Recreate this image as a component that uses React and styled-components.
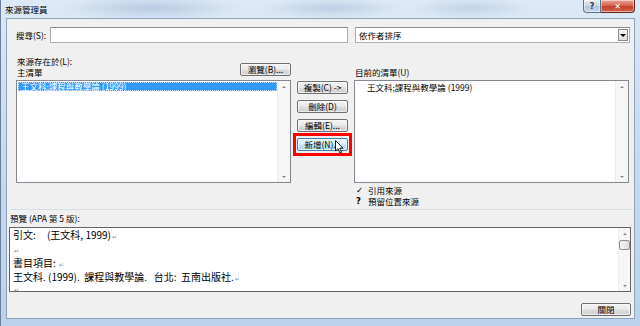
import styled, { createGlobalStyle } from "styled-components";

const GlobalStyle = createGlobalStyle`
  html, body { margin: 0; padding: 0; background: #fff; }
  body {
    font-family: "Noto Sans CJK TC", "Noto Sans", sans-serif;
    color: #000;
  }
`;

const App = () => {
  return (
    <>
      <GlobalStyle />
      <Window>
        <TitleBar>
          <Title>來源管理員</Title>
          <Captions>
            <CaptionButton>?</CaptionButton>
            <CaptionButton $close>✕</CaptionButton>
          </Captions>
        </TitleBar>

        <Client>
          <SearchRow>
            <Label $width={34}>搜尋(S):</Label>
            <TextBox />
            <Select>
              <span>依作者排序</span>
              <SelectArrow />
            </Select>
          </SearchRow>

          <Main>
            <Pane>
              <PaneHeader>
                <Labels>
                  <Label>來源存在於(L):</Label>
                  <Label>主清單</Label>
                </Labels>
                <Button $width={51}>瀏覽(B)...</Button>
              </PaneHeader>
              <ListBox>
                <Items>
                  <ListItem $selected>王文科;課程與教學論 (1999)</ListItem>
                </Items>
                <ScrollBar>
                  <ScrollArrow />
                  <ScrollArrow $down />
                </ScrollBar>
              </ListBox>
            </Pane>

            <Middle>
              <Button>複製(C) -&gt;</Button>
              <Button>刪除(D)</Button>
              <Button>編輯(E)...</Button>
              <Button $hover $marked>
                新增(N)...
                <Cursor viewBox="0 0 9 14">
                  <path
                    d="M0.5 0.5 L0.5 11 L3 8.7 L5 13 L6.6 12.3 L4.7 8.2 L8 8.2 Z"
                    fill="#fff"
                    stroke="#000"
                    strokeWidth="0.9"
                    strokeLinejoin="round"
                  />
                </Cursor>
              </Button>
            </Middle>

            <Pane>
              <PaneHeader>
                <Label>目前的清單(U)</Label>
              </PaneHeader>
              <ListBox>
                <Items>
                  <ListItem $indent>王文科;課程與教學論 (1999)</ListItem>
                </Items>
                <ScrollBar>
                  <ScrollArrow />
                  <ScrollArrow $down />
                </ScrollBar>
              </ListBox>
              <Legend>
                <LegendRow>
                  <Mark>✓</Mark>
                  <span>引用來源</span>
                </LegendRow>
                <LegendRow>
                  <Mark>?</Mark>
                  <span>預留位置來源</span>
                </LegendRow>
              </Legend>
            </Pane>
          </Main>

          <Divider />
          <PreviewLabel>預覽 (APA 第 5 版):</PreviewLabel>
          <Preview>
            <PreviewText>
              <Line>
                引文:&nbsp;&nbsp;&nbsp;&nbsp;&nbsp;(王文科, 1999)<Pilcrow>↵</Pilcrow>
              </Line>
              <Line>
                <Pilcrow>↵</Pilcrow>
              </Line>
              <Line>
                書目項目: <Pilcrow>↵</Pilcrow>
              </Line>
              <Line>
                王文科. (1999).&nbsp;&nbsp;課程與教學論.&nbsp;&nbsp;&nbsp;台北:&nbsp;&nbsp;五南出版社.
                <Pilcrow>↵</Pilcrow>
              </Line>
              <Line $last>
                <Pilcrow>↵</Pilcrow>
              </Line>
            </PreviewText>
            <ScrollBar $wide>
              <ScrollArrow />
              <Thumb />
              <Spacer />
              <ScrollArrow $down />
            </ScrollBar>
          </Preview>

          <Footer>
            <Button $width={50}>關閉</Button>
          </Footer>
        </Client>
      </Window>
    </>
  );
};

export default App;

const Window = styled.div`
  width: 640px;
  height: 326px;
  box-sizing: border-box;
  display: flex;
  flex-direction: column;
  overflow: hidden;
  border-left: 1px solid #6b7f99;
  background:
    radial-gradient(ellipse 90px 12px at 150px 8px, rgba(120, 150, 190, 0.35), transparent),
    radial-gradient(ellipse 70px 10px at 330px 8px, rgba(120, 150, 190, 0.3), transparent),
    radial-gradient(ellipse 60px 10px at 470px 8px, rgba(120, 150, 190, 0.25), transparent),
    linear-gradient(180deg, #dce9f6 0%, #c9dcf0 40%, #bcd2ea 100%);
`;

const TitleBar = styled.div`
  height: 18px;
  display: flex;
  align-items: flex-start;
  padding-left: 4px;
`;

const Title = styled.div`
  font-size: 8.5px;
  line-height: 18px;
  color: #000;
`;

const Captions = styled.div`
  margin-left: auto;
  margin-right: 5px;
  display: flex;
`;

const CaptionButton = styled.div`
  width: ${(p) => (p.$close ? 34 : 18)}px;
  height: 13px;
  box-sizing: border-box;
  display: flex;
  align-items: center;
  justify-content: center;
  font-family: "DejaVu Sans", sans-serif;
  font-size: 8px;
  font-weight: bold;
  color: ${(p) => (p.$close ? "#fff" : "#2a3a50")};
  border: 1px solid ${(p) => (p.$close ? "#6b2a20" : "#5d7191")};
  border-top: none;
  border-left: ${(p) => (p.$close ? "none" : undefined)};
  border-radius: ${(p) => (p.$close ? "0 0 4px 0" : "0 0 0 4px")};
  background: ${(p) =>
    p.$close
      ? "linear-gradient(180deg, #e9a99a 0%, #d6654f 45%, #c2412b 55%, #d0674f 100%)"
      : "linear-gradient(180deg, #e6eef7 0%, #cbd8e8 45%, #b3c5dc 55%, #c8d6e8 100%)"};
  box-shadow: inset 0 0 0 1px rgba(255, 255, 255, 0.45);
`;

const Client = styled.div`
  flex: 1;
  margin: 0 5px 8px 5px;
  border: 1px solid #8da2bd;
  background: #f0f0f0;
  display: flex;
  flex-direction: column;
  font-size: 8.5px;
  line-height: 11px;
`;

const SearchRow = styled.div`
  display: flex;
  align-items: center;
  padding: 8px 0 0 9px;
  height: 16px;
`;

const Label = styled.div`
  font-size: 8.5px;
  line-height: 11px;
  white-space: nowrap;
  width: ${(p) => (p.$width ? `${p.$width}px` : "auto")};
`;

const TextBox = styled.div`
  width: 298px;
  height: 16px;
  box-sizing: border-box;
  background: #fff;
  border: 1px solid #abadb3;
  border-top-color: #8e8f8f;
`;

const Select = styled.div`
  margin-left: 7px;
  width: 275px;
  height: 16px;
  box-sizing: border-box;
  background: #fff;
  border: 1px solid #abadb3;
  border-top-color: #8e8f8f;
  display: flex;
  align-items: center;
  padding-left: 3px;
  font-size: 8.5px;
`;

const SelectArrow = styled.div`
  margin-left: auto;
  margin-right: 1px;
  width: 10px;
  height: 12px;
  box-sizing: border-box;
  border: 1px solid #8a8a8a;
  background: linear-gradient(180deg, #f6f6f6, #dcdcdc);
  display: flex;
  align-items: center;
  justify-content: center;
  &::after {
    content: "";
    border-left: 3px solid transparent;
    border-right: 3px solid transparent;
    border-top: 3px solid #000;
  }
`;

const Main = styled.div`
  display: grid;
  grid-template-columns: 275px 51px 275px;
  column-gap: 6px;
  padding-left: 9px;
  margin-top: 13px;
`;

const Pane = styled.div`
  display: flex;
  flex-direction: column;
`;

const PaneHeader = styled.div`
  height: 22px;
  display: flex;
  align-items: flex-end;
  justify-content: space-between;
  margin-bottom: 2px;
  padding-left: 1px;
`;

const Labels = styled.div`
  display: flex;
  flex-direction: column;
`;

const Button = styled.div`
  position: relative;
  width: ${(p) => (p.$width ? `${p.$width}px` : "51px")};
  height: 13px;
  box-sizing: border-box;
  display: flex;
  align-items: center;
  justify-content: center;
  font-size: 8.5px;
  white-space: nowrap;
  border: 1px solid ${(p) => (p.$hover ? "#3c7fb1" : "#707070")};
  border-radius: 2px;
  background: ${(p) =>
    p.$hover
      ? "linear-gradient(180deg, #eaf6fd 0%, #d9f0fc 48%, #bee6fd 52%, #a7d9f5 100%)"
      : "linear-gradient(180deg, #f2f2f2 0%, #ebebeb 48%, #dddddd 52%, #cfcfcf 100%)"};
  box-shadow: inset 0 0 0 1px rgba(255, 255, 255, 0.6);
  margin-bottom: ${(p) => (p.$width ? "2px" : "0")};

  &::before {
    content: "";
    display: ${(p) => (p.$marked ? "block" : "none")};
    position: absolute;
    left: -5px;
    right: -5px;
    top: -6px;
    bottom: -6px;
    border: 3px solid #ff0000;
  }
`;

const Cursor = styled.svg`
  position: absolute;
  left: 37px;
  top: 1px;
  width: 9px;
  height: 14px;
`;

const Middle = styled.div`
  display: flex;
  flex-direction: column;
  gap: 6px;
  padding-top: 25px;
`;

const ListBox = styled.div`
  height: 103px;
  box-sizing: border-box;
  border: 1px solid #828790;
  background: #fff;
  display: flex;
`;

const Items = styled.div`
  flex: 1;
  padding: 1px 0 0 1px;
`;

const ListItem = styled.div`
  height: 9px;
  line-height: 9px;
  font-size: 8.5px;
  padding-left: ${(p) => (p.$indent ? "11px" : "3px")};
  margin-top: ${(p) => (p.$indent ? "1px" : "0")};
  color: ${(p) => (p.$selected ? "#fff" : "#000")};
  background: ${(p) => (p.$selected ? "#3399ff" : "transparent")};
  outline: ${(p) => (p.$selected ? "1px dotted #c9e3ff" : "none")};
  outline-offset: -1px;
  white-space: nowrap;
`;

const ScrollBar = styled.div`
  width: ${(p) => (p.$wide ? "11px" : "12px")};
  background: #f6f6f6;
  border-left: 1px solid #ececec;
  display: flex;
  flex-direction: column;
  justify-content: space-between;
`;

const ScrollArrow = styled.div`
  height: 11px;
  display: flex;
  align-items: center;
  justify-content: center;
  &::after {
    content: "";
    border-left: 2.5px solid transparent;
    border-right: 2.5px solid transparent;
    ${(p) =>
      p.$down
        ? "border-top: 2.5px solid #8a8a8a;"
        : "border-bottom: 2.5px solid #8a8a8a;"}
  }
`;

const Thumb = styled.div`
  height: 10px;
  margin: 1px 0 0 0;
  box-sizing: border-box;
  border: 1px solid #8f8f8f;
  border-radius: 2px;
  background: linear-gradient(90deg, #f3f3f3, #dedede);
`;

const Spacer = styled.div`
  flex: 1;
`;

const Legend = styled.div`
  margin-top: 2px;
  display: flex;
  flex-direction: column;
`;

const LegendRow = styled.div`
  display: flex;
  font-size: 8.5px;
  line-height: 11px;
  padding-left: 2px;
`;

const Mark = styled.span`
  width: 12px;
  font-weight: bold;
  font-family: "DejaVu Sans", sans-serif;
  font-size: 8.5px;
`;

const Divider = styled.div`
  margin: 2px 3px 0 3px;
  height: 1px;
  background: #d5dfe5;
`;

const PreviewLabel = styled.div`
  margin: 3px 0 0 3px;
  font-size: 8.5px;
  line-height: 11px;
`;

const Preview = styled.div`
  margin: 3px 3px 0 2px;
  height: 65px;
  box-sizing: border-box;
  border: 1px solid #646464;
  background: #fff;
  display: flex;
`;

const PreviewText = styled.div`
  flex: 1;
  padding: 0 0 0 3px;
`;

const Line = styled.div`
  font-size: 10px;
  line-height: ${(p) => (p.$last ? "8px" : "14px")};
  height: ${(p) => (p.$last ? "8px" : "14px")};
  white-space: nowrap;
`;

const Pilcrow = styled.span`
  font-family: "DejaVu Sans", sans-serif;
  font-size: 6px;
  color: #7d8ea8;
  margin-left: 1px;
`;

const Footer = styled.div`
  display: flex;
  justify-content: flex-end;
  padding: 11px 3px 0 0;
`;
